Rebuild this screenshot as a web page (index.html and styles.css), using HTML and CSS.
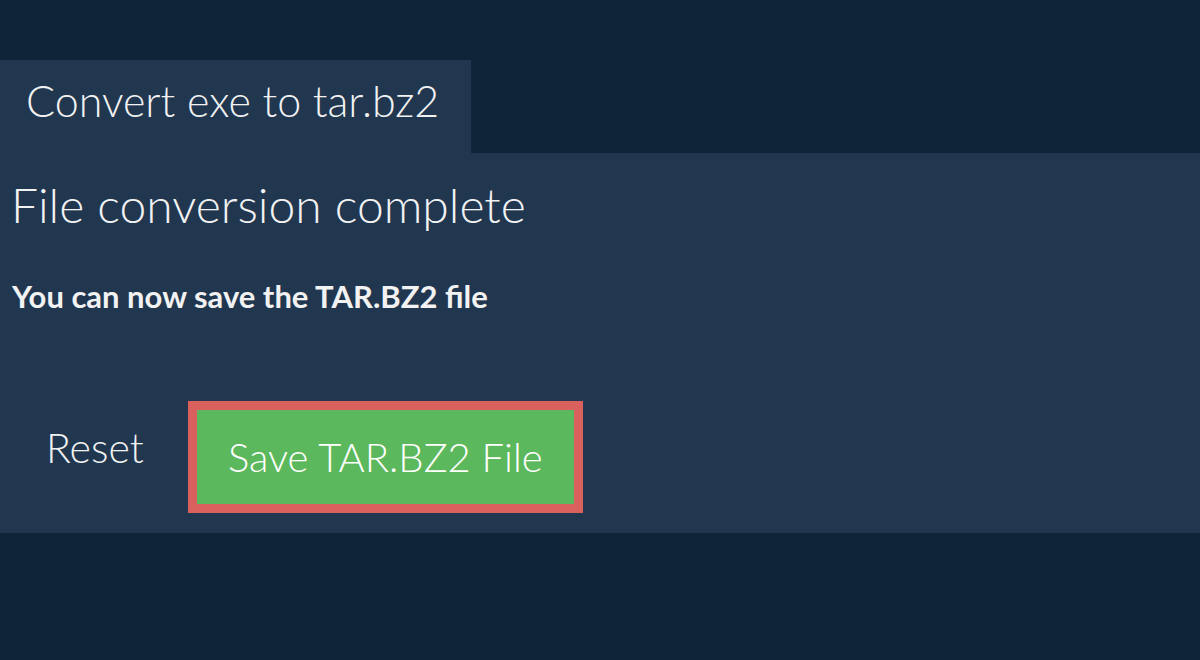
FILE: index.html
```html
<!DOCTYPE html>
<html>
<head>
<meta charset="utf-8">
<link rel="stylesheet" href="styles.css">
</head>
<body>
<div class="page">
  <div class="tab">Convert exe to tar.bz2</div>
  <div class="panel">
    <h1 class="title">File conversion complete</h1>
    <p class="sub">You can now save the TAR.BZ2 file</p>
    <div class="actions">
      <button class="reset">Reset</button>
      <button class="save">Save TAR.BZ2 File</button>
    </div>
  </div>
</div>
</body>
</html>
```
FILE: styles.css
```css
html, body {
  margin: 0;
  padding: 0;
  background: #0f2339;
  font-family: "Lato", "Liberation Sans", sans-serif;
  color: #f2f2f2;
}
.page {
  padding-top: 60px;
}
.tab {
  display: inline-block;
  vertical-align: top;
  width: 471px;
  height: 93px;
  box-sizing: border-box;
  background: #213750;
  padding: 15px 0 0 26px;
  font-size: 43px;
  font-weight: 300;
  line-height: 52px;
  white-space: nowrap;
}
.panel {
  background: #213750;
  height: 380px;
  box-sizing: border-box;
  padding: 24px 11px 0 11px;
}
.title {
  margin: 0;
  font-size: 48px;
  font-weight: 300;
  line-height: 56px;
}
.sub {
  margin: 44px 0 0 1px;
  font-size: 31px;
  font-weight: 700;
  line-height: 38px;
}
.actions {
  display: flex;
  align-items: flex-start;
  margin-top: 86px;
  gap: 44px;
  padding-left: 35px;
}
.reset {
  background: none;
  border: none;
  color: #f2f2f2;
  font-family: inherit;
  font-size: 41px;
  font-weight: 300;
  line-height: 48px;
  padding: 0;
  margin-top: 23px;
}
.save {
  background: #5cb85c;
  border: 9px solid #d9605c;
  color: #ffffff;
  font-family: inherit;
  font-size: 40px;
  font-weight: 300;
  width: 395px;
  height: 112px;
  box-sizing: border-box;
  padding: 0;
}
```
